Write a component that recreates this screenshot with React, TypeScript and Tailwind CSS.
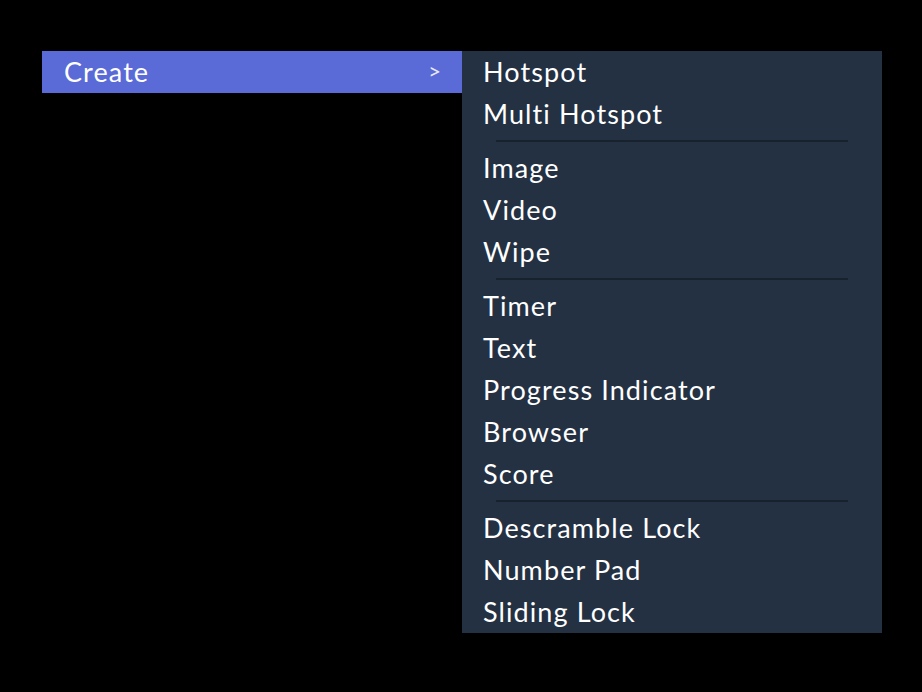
import React from "react";

const groups: string[][] = [
  ["Hotspot", "Multi Hotspot"],
  ["Image", "Video", "Wipe"],
  ["Timer", "Text", "Progress Indicator", "Browser", "Score"],
  ["Descramble Lock", "Number Pad", "Sliding Lock"],
];

export default function App() {
  return (
    <div
      className="w-[922px] h-[692px] bg-black flex items-start pt-[51px] pl-[42px]"
      style={{ fontFamily: "Lato, 'Open Sans', sans-serif" }}
    >
      <div className="w-[420px] h-[42px] bg-[#5a6ad6] flex items-center justify-between pl-[22px] pr-[21px] pb-[2px] text-white">
        <span className="text-[27px] leading-none tracking-[1.1px]">Create</span>
        <span className="text-[22px] leading-none text-[#e8eaf8]">&gt;</span>
      </div>
      <div className="w-[420px] bg-[#233143] flex flex-col">
        {groups.map((g, gi) => (
          <React.Fragment key={gi}>
            {gi > 0 && (
              <div className="h-[12px] flex items-center pl-[34px] pr-[34px]">
                <div className="h-[2px] w-full bg-[#18222e]" />
              </div>
            )}
            {g.map((item) => (
              <div
                key={item}
                className="h-[42px] flex items-center pl-[21px] pb-[2px] text-white text-[27px] leading-none tracking-[1.1px]"
              >
                {item}
              </div>
            ))}
          </React.Fragment>
        ))}
      </div>
    </div>
  );
}
